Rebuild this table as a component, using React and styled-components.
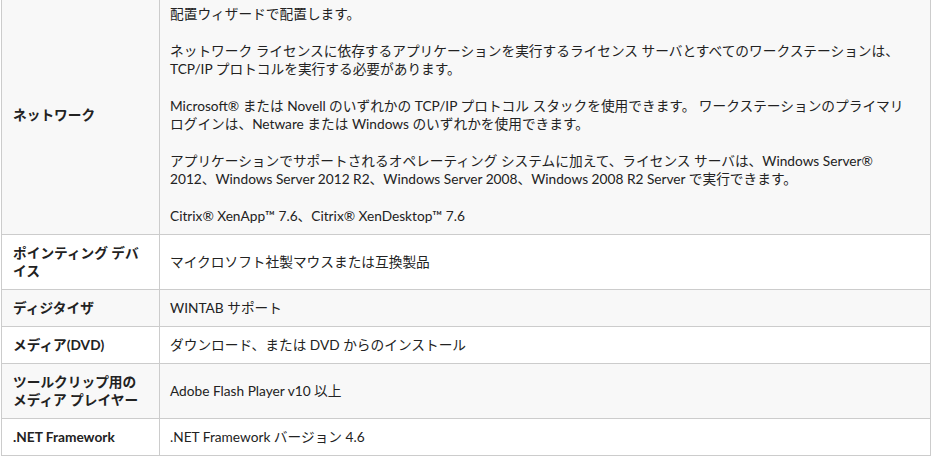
import React from "react";
import styled, { createGlobalStyle } from "styled-components";

const GlobalStyle = createGlobalStyle`
  body {
    margin: 0;
    background: #fff;
    color: #222;
    font-family: Lato, "Noto Sans CJK JP", sans-serif;
  }
`;

const Spec = styled.div`
  width: 930px;
  margin: -5px 0 0 1px;
  border: 1px solid #ccc;
  border-bottom: none;
  box-sizing: border-box;
  font-size: 13.7px;
  line-height: 18px;
`;

const Row = styled.div`
  display: grid;
  grid-template-columns: 158px 1fr;
  border-bottom: 1px solid #ccc;
  background: ${(p) => (p.$shade ? "#f8f8f8" : "#fff")};
`;

const Label = styled.div`
  display: flex;
  align-items: center;
  padding: 9px 12px 9px 11px;
  border-right: 1px solid #ccc;
  font-weight: 700;
`;

const Value = styled.div`
  align-self: center;
  padding: 9px 10px;
  white-space: nowrap;
  p {
    margin: 0 0 19px;
  }
  p:last-child {
    margin-bottom: 0;
  }
`;

// each paragraph is a list of its printed lines
const rows = [
  {
    label: "ネットワーク",
    value: [
      ["配置ウィザードで配置します。"],
      [
        "ネットワーク ライセンスに依存するアプリケーションを実行するライセンス サーバとすべてのワークステーションは、",
        "TCP/IP プロトコルを実行する必要があります。",
      ],
      [
        "Microsoft® または Novell のいずれかの TCP/IP プロトコル スタックを使用できます。 ワークステーションのプライマリ",
        "ログインは、Netware または Windows のいずれかを使用できます。",
      ],
      [
        "アプリケーションでサポートされるオペレーティング システムに加えて、ライセンス サーバは、Windows Server®",
        "2012、Windows Server 2012 R2、Windows Server 2008、Windows 2008 R2 Server で実行できます。",
      ],
      ["Citrix® XenApp™ 7.6、Citrix® XenDesktop™ 7.6"],
    ],
  },
  { label: "ポインティング デバイス", value: [["マイクロソフト社製マウスまたは互換製品"]] },
  { label: "ディジタイザ", value: [["WINTAB サポート"]] },
  { label: "メディア(DVD)", value: [["ダウンロード、または DVD からのインストール"]] },
  { label: "ツールクリップ用のメディア プレイヤー", value: [["Adobe Flash Player v10 以上"]] },
  { label: ".NET Framework", value: [[".NET Framework バージョン 4.6"]] },
];

const App = () => {
  return (
    <>
      <GlobalStyle />
      <Spec>
        {rows.map((r, i) => (
          <Row key={r.label} $shade={i % 2 === 0}>
            <Label>{r.label}</Label>
            <Value>
              {r.value.map((lines) => (
                <p key={lines[0]}>
                  {lines.map((l, j) => (
                    <React.Fragment key={j}>
                      {j > 0 && <br />}
                      {l}
                    </React.Fragment>
                  ))}
                </p>
              ))}
            </Value>
          </Row>
        ))}
      </Spec>
    </>
  );
};

export default App;
